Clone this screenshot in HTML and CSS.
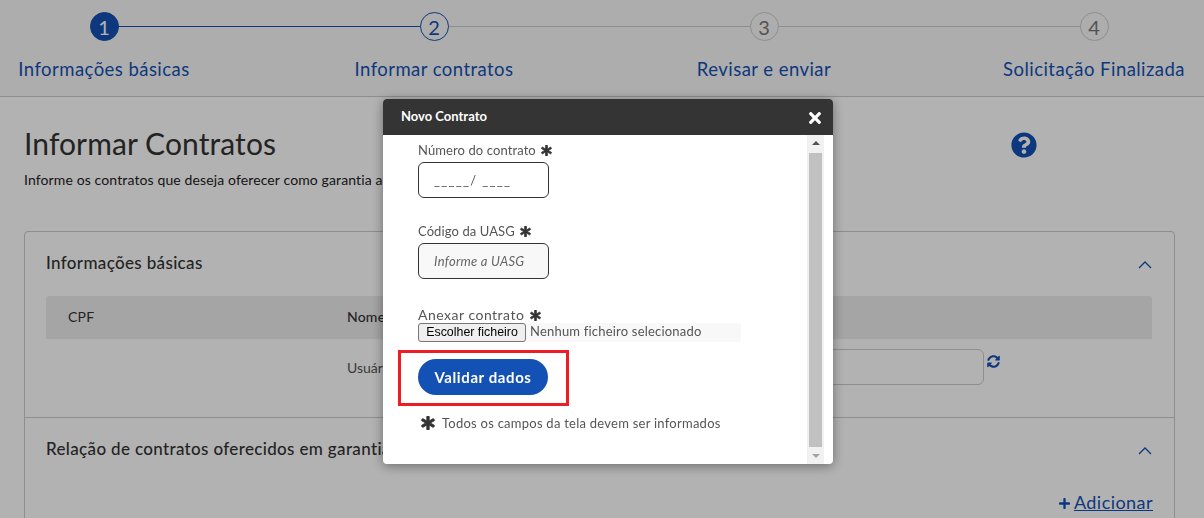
FILE: index.html
```html
<!DOCTYPE html>
<html lang="pt">
<head>
<meta charset="utf-8">
<title>Novo Contrato</title>
<link rel="stylesheet" href="styles.css">
</head>
<body>
<svg class="defs" width="0" height="0" aria-hidden="true">
  <symbol id="ast" viewBox="0 0 512 512"><path d="M478.21 334.093L336 256l142.21-78.093c11.795-6.477 15.961-21.384 9.232-33.037l-19.48-33.741c-6.728-11.653-21.72-15.499-33.227-8.523L296 186.718l3.475-162.204C299.763 11.061 288.937 0 275.48 0h-38.96c-13.456 0-24.283 11.061-23.994 24.514L216 186.718 77.265 102.607c-11.506-6.976-26.499-3.13-33.227 8.523l-19.48 33.741c-6.728 11.653-2.562 26.56 9.233 33.037L176 256 33.79 334.093c-11.795 6.477-15.961 21.384-9.232 33.037l19.48 33.741c6.728 11.653 21.721 15.499 33.227 8.523L216 325.282l-3.475 162.204C212.237 500.939 223.064 512 236.52 512h38.961c13.456 0 24.283-11.061 23.995-24.514L296 325.282l138.735 84.111c11.506 6.976 26.499 3.13 33.227-8.523l19.48-33.741c6.728-11.653 2.563-26.559-9.232-33.036z"/></symbol>
  <symbol id="chev" viewBox="0 0 14 8"><path d="M1 7l6-6 6 6" fill="none" stroke="currentColor" stroke-width="1.3"/></symbol>
</svg>

<header class="stepper">
  <div class="step done"><span class="num">1</span><span class="lbl">Informações básicas</span></div>
  <div class="step current"><span class="num">2</span><span class="lbl">Informar contratos</span></div>
  <div class="step"><span class="num">3</span><span class="lbl">Revisar e enviar</span></div>
  <div class="step last"><span class="num">4</span><span class="lbl">Solicitação Finalizada</span></div>
</header>

<main class="content">
  <div class="title-row">
    <div>
      <h1 class="title">Informar Contratos</h1>
      <p class="sub">Informe os contratos que deseja oferecer como garantia a</p>
    </div>
    <svg class="help" viewBox="0 0 512 512"><path d="M504 256c0 136.997-111.043 248-248 248S8 392.997 8 256C8 119.083 119.043 8 256 8s248 111.083 248 248zM262.655 90c-54.497 0-89.255 22.957-116.549 63.758-3.536 5.286-2.353 12.415 2.715 16.258l34.699 26.31c5.205 3.947 12.621 3.008 16.665-2.122 17.864-22.658 30.113-35.797 57.303-35.797 20.429 0 45.698 13.148 45.698 32.958 0 14.976-12.363 22.667-32.534 33.976C247.128 238.528 216 254.941 216 296v4c0 6.627 5.373 12 12 12h56c6.627 0 12-5.373 12-12v-1.333c0-28.462 83.186-29.647 83.186-106.667 0-58.002-60.165-102-116.531-102zM256 338c-25.365 0-46 20.635-46 46 0 25.364 20.635 46 46 46s46-20.636 46-46c0-25.365-20.635-46-46-46z"/></svg>
  </div>

  <section class="card">
    <div class="sec sec-first">
      <div class="sec-head">
        <h2 class="sec-title">Informações básicas</h2>
        <svg class="chev"><use href="#chev"/></svg>
      </div>
      <div class="thead"><span class="cpf">CPF</span><span class="nome">Nome</span></div>
      <div class="trow">
        <span class="usuario">Usuário</span>
        <span class="fake-input"></span>
        <svg class="sync" viewBox="0 0 512 512"><path d="M370.72 133.28C339.458 104.008 298.888 87.962 255.848 88c-77.458.068-144.328 53.178-162.791 126.85-1.344 5.363-6.122 9.15-11.651 9.15H24.103c-7.498 0-13.194-6.807-11.807-14.176C33.933 94.924 134.813 8 256 8c66.448 0 126.791 26.136 171.315 68.685L463.03 40.97C478.149 25.851 504 36.559 504 57.941V192c0 13.255-10.745 24-24 24H345.941c-21.382 0-32.09-25.851-16.971-40.971l41.75-41.749zM32 296h134.059c21.382 0 32.09 25.851 16.971 40.971l-41.75 41.75c31.262 29.273 71.835 45.319 114.876 45.28 77.418-.07 144.315-53.144 162.787-126.849 1.344-5.363 6.122-9.15 11.651-9.15h57.304c7.498 0 13.194 6.807 11.807 14.176C478.067 417.076 377.187 504 256 504c-66.448 0-126.791-26.136-171.315-68.685L48.97 471.03C33.851 486.149 8 475.441 8 454.059V320c0-13.255 10.745-24 24-24z"/></svg>
      </div>
    </div>
    <div class="sec">
      <div class="sec-head">
        <h2 class="sec-title">Relação de contratos oferecidos em garantia</h2>
        <svg class="chev"><use href="#chev"/></svg>
      </div>
      <div class="add-row">
        <svg class="plus" viewBox="0 0 448 512"><path d="M416 208H272V64c0-17.67-14.33-32-32-32h-32c-17.67 0-32 14.33-32 32v144H32c-17.67 0-32 14.33-32 32v32c0 17.67 14.33 32 32 32h144v144c0 17.67 14.33 32 32 32h32c17.67 0 32-14.33 32-32V304h144c17.67 0 32-14.33 32-32v-32c0-17.67-14.33-32-32-32z"/></svg>
        <a class="add" href="#">Adicionar</a>
      </div>
    </div>
  </section>
</main>

<div class="backdrop"></div>

<div class="modal">
  <div class="modal-head">
    <span class="modal-title">Novo Contrato</span>
    <svg class="close" viewBox="0 0 352 512"><path d="M242.72 256l100.07-100.07c12.28-12.28 12.28-32.19 0-44.48l-22.24-22.24c-12.28-12.28-32.19-12.28-44.48 0L176 189.28 75.93 89.21c-12.28-12.28-32.19-12.28-44.48 0L9.21 111.45c-12.28 12.28-12.28 32.19 0 44.48L109.28 256 9.21 356.07c-12.28 12.28-12.28 32.19 0 44.48l22.24 22.24c12.28 12.28 32.2 12.28 44.48 0L176 322.72l100.07 100.07c12.28 12.28 32.2 12.28 44.48 0l22.24-22.24c12.28-12.28 12.28-32.19 0-44.48L242.72 256z"/></svg>
  </div>
  <div class="modal-body">
    <div class="form">
      <label class="f-label">Número do contrato <svg class="ast"><use href="#ast"/></svg></label>
      <div class="f-input mask">_____/ ____</div>
      <label class="f-label second">Código da UASG <svg class="ast"><use href="#ast"/></svg></label>
      <div class="f-input ph">Informe a UASG</div>
      <label class="f-label third">Anexar contrato <svg class="ast"><use href="#ast"/></svg></label>
      <div class="file"><button class="file-btn" type="button">Escolher ficheiro</button><span class="file-name">Nenhum ficheiro selecionado</span></div>
      <div class="mark"><button class="validate" type="button">Validar dados</button></div>
      <p class="note"><svg class="ast big"><use href="#ast"/></svg>Todos os campos da tela devem ser informados</p>
    </div>
    <div class="scrollbar">
      <span class="arrow up"></span>
      <span class="thumb"></span>
      <span class="arrow down"></span>
    </div>
  </div>
</div>
</body>
</html>
```

FILE: styles.css
```css
* { box-sizing: border-box; }
html, body { margin: 0; height: 518px; overflow: hidden; }
body { background: #fff; font-family: Lato, "Open Sans", sans-serif; color: #333; }
.defs { position: absolute; }

/* stepper */
.stepper {
  height: 97px;
  padding-left: 14px;
  padding-top: 12px;
  display: grid;
  grid-template-columns: repeat(4, 180px);
  column-gap: 150px;
  background: #f8f8f8;
  border-bottom: 1px solid #ccc;
}
.step { position: relative; display: flex; flex-direction: column; align-items: center; }
.step::after {
  content: "";
  position: absolute;
  left: 50%;
  top: 14px;
  width: 330px;
  height: 1px;
  background: #ccc;
}
.step.done::after { background: #1351b4; }
.step.last::after { display: none; }
.num {
  position: relative;
  z-index: 1;
  width: 29px;
  height: 29px;
  border-radius: 50%;
  border: 1px solid #ccc;
  background: #f8f8f8;
  color: #777;
  font-size: 20px;
  line-height: 28px;
  text-align: center;
}
.done .num { background: #1351b4; border-color: #1351b4; color: #fff; }
.current .num { border-color: #1351b4; color: #1351b4; }
.lbl {
  margin-top: 16px;
  font-size: 18.5px;
  line-height: 24px;
  color: #1351b4;
  white-space: nowrap;
  letter-spacing: .45px;
}

/* page */
.content { padding: 0 29px 0 24px; }
.title-row { display: flex; justify-content: space-between; padding-top: 28px; padding-right: 138px; height: 134px; }
.title { margin: 0; font-size: 30px; font-weight: 400; line-height: 36px; color: #333; letter-spacing: .1px; }
.sub { margin: 10px 0 0; font-size: 14px; line-height: 18px; color: #222; letter-spacing: .12px; white-space: nowrap; }
.help { width: 26px; height: 26px; margin-top: 7px; fill: #1351b4; }

.card { border: 1px solid #ccc; border-radius: 4px; height: 320px; }
.sec { padding: 0 22px 0 21px; }
.sec-first { height: 186px; border-bottom: 1px solid #ccc; }
.sec-head { display: flex; justify-content: space-between; align-items: center; height: 64px; }
.sec-title { margin: 0 0 3px; font-size: 17px; font-weight: 500; color: #333; letter-spacing: .34px; white-space: nowrap; }
.chev { width: 14px; height: 8px; margin: 2px 0 0; color: #1351b4; }
.thead {
  height: 43px;
  background: #ececec;
  border-radius: 3px 3px 0 0;
  display: flex;
  align-items: center;
  padding: 0 0 2px 22px;
  font-size: 14px;
  color: #333;
  letter-spacing: .2px;
}
.cpf { width: 279px; }
.nome { font-weight: 500; }
.trow { display: flex; padding: 10px 0 0 301px; }
.usuario { font-size: 14px; color: #555; line-height: 38px; width: 60px; }
.fake-input { width: 577px; height: 36px; border: 1px solid #ccc; border-radius: 6px; }
.sync { width: 13px; height: 13px; margin: 6px 0 0 3px; fill: #1351b4; }
.add-row { display: flex; justify-content: flex-end; align-items: center; gap: 4px; margin: 8px -1px 0 0; }
.plus { width: 11px; height: 13px; margin-top: 2px; fill: #1351b4; }
.add { font-size: 18px; line-height: 24px; color: #1351b4; text-decoration: underline; letter-spacing: .45px; }

/* backdrop + modal */
.backdrop { position: fixed; inset: 0; z-index: 5; background: rgba(0, 0, 0, .3); }
.modal {
  position: fixed;
  z-index: 6;
  left: 383px;
  top: 99px;
  width: 450px;
  height: 365px;
  background: #fff;
  border-radius: 4px;
  box-shadow: 0 2px 12px rgba(0, 0, 0, .4);
  display: flex;
  flex-direction: column;
  overflow: hidden;
}
.modal-head {
  height: 36px;
  background: #343434;
  color: #fff;
  display: flex;
  justify-content: space-between;
  align-items: center;
  padding: 0 12px 0 18px;
}
.modal-title { margin-bottom: 3px; font-size: 13px; font-weight: 700; }
.close { width: 12px; height: 18px; margin-top: 1px; fill: #fff; }
.modal-body { flex: 1; display: flex; justify-content: space-between; min-height: 0; padding-right: 9px; }
.form { padding: 6px 0 0 35px; }
.f-label { display: block; font-size: 13px; line-height: 18px; color: #555; letter-spacing: .1px; white-space: nowrap; }
.ast { width: 11px; height: 11px; margin-left: 2px; vertical-align: -1px; fill: #333; stroke: #333; stroke-width: 36; }
.f-input {
  width: 131px;
  height: 36px;
  margin-top: 3px;
  border: 1px solid #333;
  border-radius: 6px;
  padding-left: 15px;
  line-height: 34px;
  font-size: 13px;
  color: #555;
}
.mask { letter-spacing: 1.3px; }
.ph { background: #f8f8f8; font-style: italic; color: #666; letter-spacing: .25px; }
.second { margin-top: 24px; }
.third { margin-top: 27px; font-size: 14px; line-height: 17px; letter-spacing: .5px; }
.file { width: 323px; height: 19px; background: #f8f8f8; display: flex; align-items: center; }
.file-btn {
  width: 108px;
  height: 19px;
  padding: 0;
  font: 12.4px/17px "Liberation Sans", sans-serif;
  color: #000;
  background: #efefef;
  border: 1px solid #767676;
  border-radius: 3px;
}
.file-name { margin: 0 0 3px 4px; font-size: 13px; color: #555; letter-spacing: .2px; white-space: nowrap; }
.mark {
  width: 171px;
  height: 56px;
  margin: 8px 0 0 -20px;
  padding: 7px 0 0 17px;
  border: 3px solid #ee1c25;
}
.mark { padding-top: 6px; }
.validate {
  display: block;
  width: 130px;
  height: 36px;
  padding: 0;
  border: 0;
  border-radius: 18px;
  background: #1351b4;
  color: #fff;
  font: 700 15px/36px Lato, sans-serif;
  letter-spacing: .6px;
}
.note { display: flex; align-items: center; margin: 8px 0 0 3px; font-size: 13px; line-height: 18px; color: #555; letter-spacing: .25px; white-space: nowrap; }
.ast.big { width: 14px; height: 14px; margin: 0 7px 0 0; }
.scrollbar { width: 17px; background: #f1f1f1; display: flex; flex-direction: column; align-items: center; }
.thumb { width: 13px; flex: 1; background: #c1c1c1; }
.arrow { width: 0; height: 0; border-left: 4px solid transparent; border-right: 4px solid transparent; }
.arrow.up { margin: 6px 0 8px; border-bottom: 4px solid #505050; }
.arrow.down { margin: 7px 0 6px; border-top: 4px solid #a3a3a3; }
```
